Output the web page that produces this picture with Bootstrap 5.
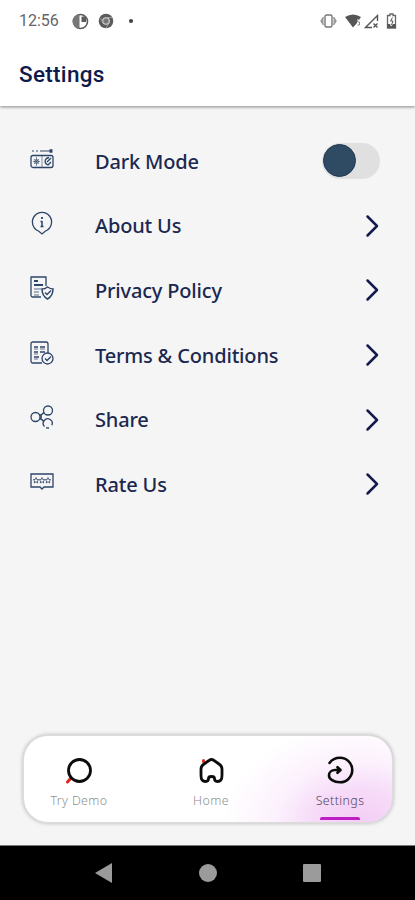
<!DOCTYPE html>
<html lang="en">
<head>
<meta charset="utf-8">
<meta name="viewport" content="width=device-width, initial-scale=1">
<title>Settings</title>
<link href="https://cdn.jsdelivr.net/npm/bootstrap@5.3.0/dist/css/bootstrap.min.css" rel="stylesheet">
<style>
body{background:#f5f5f5;font-family:"Noto Sans","Open Sans",sans-serif;color:#1b2850;height:900px;overflow:hidden}
svg{display:block;flex:none}
.status-bar{height:42px;padding:0 17px 0 19px;color:#666;font:400 16px/42px Roboto,sans-serif}
.app-bar{height:106px;background:#fff;box-shadow:0 1px 3px rgba(0,0,0,.45);z-index:1}
.app-title{font:500 22.5px/28px Roboto,sans-serif;margin:18px 0 0 19px;color:#0f1a4c;letter-spacing:.3px}
.options{padding:23px 34px 0 30px}
.option{height:64.6px;background:none;border:0;padding:0;color:inherit}
.option-icon{width:65px}
.option-icon svg{margin-top:-5px;fill:none;stroke:#2c4468;stroke-width:1.3}
.option-label{font-size:20px;line-height:28px;font-weight:500;white-space:nowrap;letter-spacing:-.17px;padding-top:1px}
.chev{fill:none;stroke:#141b4d;stroke-width:2.5;stroke-linecap:round;stroke-linejoin:round}
.toggle{width:58px;height:36px;border-radius:18px;background:#e0e0e0;padding:1px;margin-right:1px}
.knob{width:33px;height:33px;border-radius:50%;background:#2f4a63;border:1px solid #1c3552}
.tab-panel{height:88px;margin:0 22px 22px 23px;border-radius:25px;border:1px solid #dcdcdc;box-shadow:0 0 4px rgba(0,0,0,.28);background:radial-gradient(ellipse 135px 100px at 335px 88px,#f3cdf5 0,#f6dbf8 35%,rgba(250,232,252,.6) 62%,rgba(255,255,255,0) 100%),#fff}
.tab{width:110px;padding-top:19px;font-size:12.4px;line-height:18px;font-weight:300;color:#8f8f8f;letter-spacing:.4px}
.tab svg{margin-bottom:5px}
.tab.current{width:104px;color:#51445a}
.tab-line{width:40px;height:3px;border-radius:2px 2px 0 0;background:#bd1fc5;margin-top:7px}
.system-nav{height:55px;background:#000;border-top:1px solid #777}
</style>
</head>
<body class="d-flex flex-column">
<header class="app-bar flex-shrink-0 position-relative">
  <div class="status-bar d-flex align-items-center">
    <span>12:56</span>
    <svg width="17" height="17" viewBox="0 0 17 17" style="margin-left:13px"><circle cx="8.5" cy="8.5" r="7" fill="#fff" stroke="#5b5b5b" stroke-width="1.6"/><path d="M7.500 1.500a7 7 0 0 0 0 14z" fill="#777"/><path d="M9.500 3.500h4.500v5.500h-4.500z" fill="#5b5b5b"/></svg>
    <svg width="16" height="16" viewBox="0 0 16 16" style="margin-left:9px"><circle cx="8" cy="8" r="7.3" fill="#5b5b5b"/><circle cx="8" cy="8" r="3.3" fill="#777" stroke="#ddd" stroke-width="1.1"/><path d="M8 4.500h6M5 10 2.500 5M11 10l-3 5" stroke="#aaa" stroke-width=".8"/></svg>
    <svg width="6" height="6" viewBox="0 0 6 6" style="margin-left:14px"><circle cx="3" cy="3" r="2.1" fill="#444"/></svg>
    <svg class="ms-auto" width="17" height="14" viewBox="0 0 17 14" fill="none" stroke="#777" stroke-width="1.400"><path d="M3.500 3 1 7l2.500 4M13.500 3 16 7l-2.500 4" fill="#999" stroke="#999"/><rect x="5" y="1" width="7" height="12" rx="1.5" fill="#fff"/></svg>
    <svg width="17" height="14" viewBox="0 0 17 14" style="margin-left:8px"><path d="M0 3Q8 -2 16 3L14.500 5H12v4l-4 4.500z" fill="#555"/><path d="M14.500 5.500h-1.800v2.500h1.800v3h-2" fill="none" stroke="#888"/></svg>
    <svg width="15" height="15" viewBox="0 0 15 15" style="margin-left:2px" fill="none" stroke="#555" stroke-width="1.4"><path d="M13.500 7V1.500L1.500 13.500H8"/><path d="m9.500 9.500 4 4m0-4-4 4"/></svg>
    <svg width="11" height="16" viewBox="0 0 11 16" style="margin:0 1px 0 7px"><path d="M4 1h3v1.500h2.500v12.500h-8V2.500H4z" fill="none" stroke="#666" stroke-width="1.3"/><path d="M1.500 11h2.500l1 2.500L7 11h2.500v4h-8z" fill="#555"/><path d="M6.500 4.500 4.500 8h2.500L5.500 12" fill="none" stroke="#555"/></svg>
  </div>
  <h1 class="app-title">Settings</h1>
</header>
<main class="options flex-grow-1 d-flex flex-column">
  <div class="option d-flex align-items-center">
    <span class="option-icon"><svg width="24" height="24" viewBox="0 0 24 24"><rect x="1" y="8.500" width="22" height="12" rx="2"/><path d="M12 8.500v12M6.500 10v9M3 14.500h7M4 12l5 5M9 12l-5 5" stroke-width=".6"/><circle cx="6.500" cy="14.500" r="2" stroke-width=".6"/><path d="M19 10.500c-5 1-5 6-1 7.500l3-3M17 15l4-4"/><path d="M2 4h2M6 4h2M10 4h10" stroke-width="1.800" stroke="#929dac"/><path d="M19.500 4h3" stroke-width="3.500"/></svg></span>
    <span class="option-label">Dark Mode</span>
    <span class="toggle ms-auto" role="switch" aria-checked="false"><span class="knob d-block"></span></span>
  </div>
  <button class="option d-flex align-items-center">
    <span class="option-icon"><svg width="24" height="24" viewBox="0 0 24 24"><path d="M8.500 20A9.600 9.600 0 1 1 15.500 20L12 23z"/><path d="M12 10v5.500M10.500 10.500H12M10.500 15.500h3" stroke-width="1.500"/><path d="M12 6v2" stroke-width="1.800"/></svg></span>
    <span class="option-label">About Us</span>
    <svg class="chev ms-auto" width="18" height="24" viewBox="0 0 18 24"><path d="m4.500 2.500 9.500 9.500-9.500 9.500"/></svg>
  </button>
  <button class="option d-flex align-items-center">
    <span class="option-icon"><svg width="24" height="24" viewBox="0 0 24 24"><path d="M11 21H3q-2 0-2-2V1h15v9"/><path d="M4 5h4M4 9h9" stroke-width="1.800"/><path d="M4 13h7M4 16h5M4 19h5" stroke="#8c98a9"/><path d="M17.500 11q3 2 5.500 2c0 5-2 8-5.500 10-3.500-2-5.500-5-5.500-10q3 0 5.500-2z" stroke-width="1.500"/><path d="m15 16.500 2 2 4-4"/></svg></span>
    <span class="option-label">Privacy Policy</span>
    <svg class="chev ms-auto" width="18" height="24" viewBox="0 0 18 24"><path d="m4.500 2.500 9.500 9.500-9.500 9.500"/></svg>
  </button>
  <button class="option d-flex align-items-center">
    <span class="option-icon"><svg width="24" height="24" viewBox="0 0 24 24"><path d="M12 22H3q-2 0-2-2V3q0-2 2-2h13q2 0 2 2v9"/><path d="M4 6h4M10 6h5M4 11h4M10 11h5M4 16h5" stroke-width="1.600"/><path d="M4 8h4M10 8h5M4 13h4M4 18h4" stroke-width=".7"/><circle cx="17.500" cy="17.500" r="5.500"/><path d="m15 17.500 2 2 4-4"/></svg></span>
    <span class="option-label">Terms &amp; Conditions</span>
    <svg class="chev ms-auto" width="18" height="24" viewBox="0 0 18 24"><path d="m4.500 2.500 9.500 9.500-9.500 9.500"/></svg>
  </button>
  <button class="option d-flex align-items-center">
    <span class="option-icon"><svg width="24" height="24" viewBox="0 0 24 24"><circle cx="5.500" cy="12" r="4.500"/><circle cx="18" cy="5.500" r="4.500"/><path d="M14.500 21.500a4.500 4.500 0 1 1 7.300-1.200M16 22.800l3 .2"/><path d="M9.500 10h1.500l3-2.500M9.500 14h1.500l3 2.500M11 10v4" stroke-width="1.600"/></svg></span>
    <span class="option-label">Share</span>
    <svg class="chev ms-auto" width="18" height="24" viewBox="0 0 18 24"><path d="m4.500 2.500 9.500 9.500-9.500 9.500"/></svg>
  </button>
  <button class="option d-flex align-items-center">
    <span class="option-icon"><svg width="24" height="24" viewBox="0 0 24 24"><path d="M1 4h22v13h-9l-2 2-2-2H1z"/><path d="m6 7.500 .8 2 2 .2-1.500 1.300.5 2L6 11.800l-1.800 1.200.5-2-1.500-1.300 2-.2zM12 7.500l.8 2 2 .2-1.500 1.300.5 2-1.800-1.200-1.800 1.200.5-2-1.500-1.300 2-.2zM18 7.500l.8 2 2 .2-1.500 1.300.5 2-1.800-1.200-1.800 1.200.5-2-1.500-1.300 2-.2z" stroke-width=".8"/></svg></span>
    <span class="option-label">Rate Us</span>
    <svg class="chev ms-auto" width="18" height="24" viewBox="0 0 18 24"><path d="m4.500 2.500 9.500 9.500-9.500 9.500"/></svg>
  </button>
</main>
<nav class="tab-panel flex-shrink-0 d-flex justify-content-between">
  <div class="tab d-flex flex-column align-items-center">
    <svg width="30" height="32" viewBox="0 0 30 32"><path d="m3.500 27 3.500-4" stroke="#e52620" stroke-width="3" stroke-linecap="round"/><circle cx="15.500" cy="15.500" r="11" fill="none" stroke="#0c0c0c" stroke-width="2.800"/></svg>
    <span>Try Demo</span>
  </div>
  <div class="tab d-flex flex-column align-items-center">
    <svg width="30" height="32" viewBox="0 0 30 32" fill="none" stroke-linecap="round" stroke-linejoin="round"><path d="M7.500 5.500v1" stroke="#e52620" stroke-width="3"/><path d="M15.500 4.500q1.200 0 2.500 1l5 3.500q3 2 3 5v6.500c0 4-2 6-4.500 6-2 0-3-1-3-3 0-1.500-1-2-3-2s-3 .5-3 2c0 2-1 3-3 3-2.500 0-4.500-2-4.500-6v-6.500q0-3 3-5l5-3.500q1.300-1 2.500-1z" stroke="#0c0c0c" stroke-width="2.800"/></svg>
    <span>Home</span>
  </div>
  <div class="tab current d-flex flex-column align-items-center">
    <svg width="30" height="32" viewBox="0 0 30 32" fill="none" stroke="#0c0c0c" stroke-width="2.600" stroke-linecap="round" stroke-linejoin="round"><path d="M4.500 8C7 4.500 11 2.800 15 2.800a12.200 12.200 0 0 1 0 24.500C8.500 27.300 4 24 4 20.500c0-3.500 3-5.500 6-5.500h4.500M12.500 12.200l3 2.800-3 2.800"/></svg>
    <span>Settings</span>
    <span class="tab-line"></span>
  </div>
</nav>
<footer class="system-nav flex-shrink-0 d-flex justify-content-center align-items-center">
  <svg width="226" height="20" viewBox="0 0 226 20" fill="#9b9b9b"><path d="M0 10 17 0v20z"/><circle cx="113" cy="10" r="9"/><rect x="208" y="1" width="18" height="18" rx="1"/></svg>
</footer>
<script src="https://cdn.jsdelivr.net/npm/bootstrap@5.3.0/dist/js/bootstrap.bundle.min.js"></script>
</body>
</html>
